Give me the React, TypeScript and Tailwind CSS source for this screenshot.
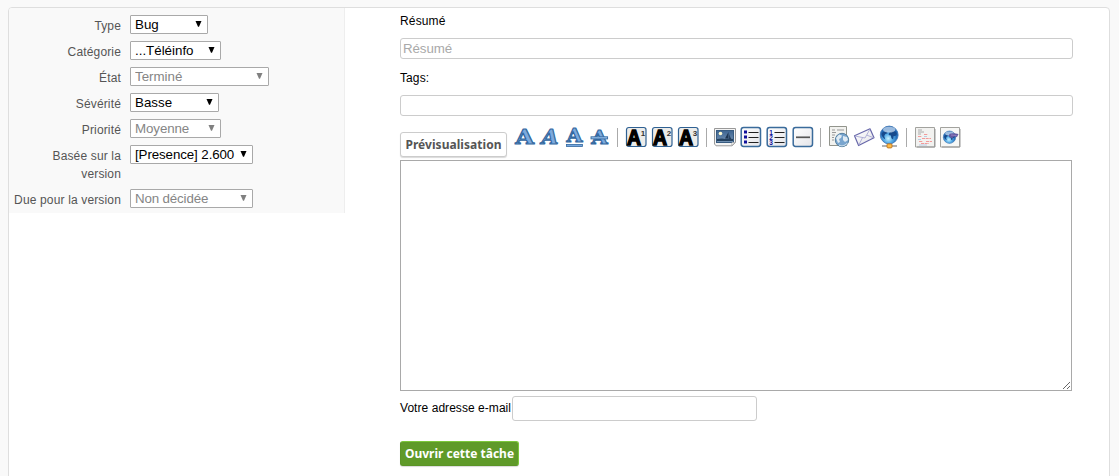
import type { ReactNode } from "react";

type Field = { label: string; value: string; width: string; height: string; tracking: string; disabled?: boolean };

const fields: Field[] = [
  { label: "Type", value: "Bug", width: "w-[78px]", height: "h-[26px]", tracking: "tracking-normal" },
  { label: "Catégorie", value: "...Téléinfo", width: "w-[91px]", height: "h-[26px]", tracking: "tracking-normal" },
  { label: "État", value: "Terminé", width: "w-[139px]", height: "h-[26px]", tracking: "tracking-normal", disabled: true },
  { label: "Sévérité", value: "Basse", width: "w-[89px]", height: "h-[26px]", tracking: "tracking-normal" },
  { label: "Priorité", value: "Moyenne", width: "w-[91px]", height: "h-[26px]", tracking: "tracking-[-0.1px]", disabled: true },
  { label: "Basée sur la version", value: "[Presence] 2.600", width: "w-[123px]", height: "h-[44px]", tracking: "tracking-[-0.1px]" },
  { label: "Due pour la version", value: "Non décidée", width: "w-[123px]", height: "h-[24px]", tracking: "tracking-[-0.15px]", disabled: true },
];

function FieldRow({ label, value, width, height, tracking, disabled }: Field) {
  return (
    <div className={`flex items-start ${height}`}>
      <label className="mt-[2px] w-[112px] shrink-0 pl-[4px] text-right text-[12px] leading-[18px] tracking-[0.15px] text-[#555]">{label}</label>
      <div className={`relative ml-[9px] h-[19px] ${width}`}>
        <select
          disabled={disabled}
          className={`block h-[19px] w-full appearance-none rounded-[1px] border border-[#a9a9a9] bg-white pl-[4px] text-[13.33px] leading-[17px] opacity-100 ${tracking} ${disabled ? "text-[#858585]" : "text-black"}`}
        >
          <option>{value}</option>
        </select>
        <svg className="pointer-events-none absolute top-[6px] right-[6px]" width="7" height="6" viewBox="0 0 7 6">
          <path d="M0.5 0H6.5L4 5.8H3Z" fill={disabled ? "#808080" : "#000"} />
        </svg>
      </div>
    </div>
  );
}

function Icon({ children }: { children: ReactNode }) {
  return (
    <svg className="block h-[24px] w-[22px] shrink-0" viewBox="0 0 22 24">
      {children}
    </svg>
  );
}

function Separator({ className }: { className: string }) {
  return <div className={`h-[19px] w-px bg-[#aaa] ${className}`} />;
}

function SmallA({ level }: { level: string }) {
  return (
    <Icon>
      <rect x="1.5" y="2.5" width="19.5" height="19" rx="2.2" fill="#ececea" stroke="#2f6193" strokeWidth="1.2" />
      <text x="2" y="20" fontFamily="Liberation Sans, sans-serif" fontWeight="700" fontSize="22.5" textLength="14" lengthAdjust="spacingAndGlyphs" fill="#000" stroke="#000" strokeWidth="1.6">A</text>
      <text x="15.8" y="10.5" fontFamily="Liberation Sans, sans-serif" fontWeight="700" fontSize="8" fill="#333">{level}</text>
    </Icon>
  );
}

function Frame() {
  return <rect x="1.2" y="2.5" width="19.3" height="19" rx="2.4" fill="url(#paper)" stroke="#3a6b9b" strokeWidth="1.5" />;
}

function Globe({ cx, cy, r }: { cx: number; cy: number; r: number }) {
  return (
    <g transform={`translate(${cx} ${cy}) scale(${r / 8})`}>
      <circle r="8" fill="url(#ocean)" stroke="#4078b4" strokeWidth="0.8" />
      <path d="M-7-1C-6-3-4-3.5-2-3L-1.5-1.5-3.5-1-4.5 1-3.5 4-5 3-6.5 1ZM0-2 3-3.5 6-3 7-1 5.5 1 4 1 3.5 4 2 3 1.5.5-.5 0Z" fill="#164a8c" />
      <ellipse cx="0" cy="-4.8" rx="5.6" ry="2.6" fill="#fff" opacity=".55" />
    </g>
  );
}

function StyledA({ x, y, size, width, italic }: { x: number; y: number; size: number; width: number; italic?: boolean }) {
  return (
    <text
      x={x}
      y={y}
      fontFamily="DejaVu Serif, serif"
      fontWeight="700"
      fontStyle={italic ? "italic" : "normal"}
      fontSize={size}
      textLength={width}
      lengthAdjust="spacingAndGlyphs"
      fill="#7caade"
      stroke="#34689f"
      strokeWidth="1.1"
      strokeLinejoin="round"
    >
      A
    </text>
  );
}

function Toolbar() {
  return (
    <div className="flex h-[24px] items-start">
      <div className="flex gap-[3px]">
        <Icon>
          <StyledA x={1.2} y={18.8} size={20} width={18.8} />
        </Icon>
        <Icon>
          <StyledA x={2.4} y={18.8} size={20} width={17} italic />
        </Icon>
        <Icon>
          <StyledA x={2.4} y={16.8} size={19} width={16} />
          <rect x="2.4" y="19.4" width="16" height="2.1" fill="#76a7df" stroke="#34689f" strokeWidth=".8" />
        </Icon>
        <Icon>
          <StyledA x={2.2} y={18.8} size={19} width={16.4} />
          <rect x="2" y="11.8" width="16.6" height="2.1" fill="#9ac3ef" stroke="#34689f" strokeWidth=".9" />
        </Icon>
      </div>
      <Separator className="mt-[3px] ml-[6px]" />
      <div className="ml-[7px] flex gap-[4px]">
        <SmallA level="1" />
        <SmallA level="2" />
        <SmallA level="3" />
      </div>
      <Separator className="mt-[3px] ml-[7px]" />
      <div className="ml-[7px] flex gap-[4px]">
        <Icon>
          <path d="M.5 3.5H21.5V17.5L18 20.8H2L.5 19Z" fill="#f4f4f4" stroke="#999" />
          <rect x="2.5" y="5.5" width="17" height="12" fill="url(#photo)" stroke="#375b80" />
          <circle cx="6.5" cy="8.5" r="1.8" fill="#fffbd1" />
          <path d="M3 14 8 13.5 11 14 15 13.5 19 14V16H3Z" fill="#24415f" />
          <path d="M14.5 7 11 13.5H14.5ZM15.2 9V14H17Z" fill="#1d3552" />
          <path d="M17.5 20.5 18 17.5H21Z" fill="#fff" stroke="#aaa" strokeWidth=".7" />
        </Icon>
        <Icon>
          <Frame />
          <path d="M4 5.5H7V8.5H4ZM4 10.5H7V13.5H4ZM4 15.5H7V18.5H4Z" fill="#10109b" />
          <path d="M8.5 7.5H18.5M8.5 12.5H18.5M8.5 17.5H18.5" stroke="#222" strokeWidth="1.2" />
        </Icon>
        <Icon>
          <Frame />
          {["1", "2", "3"].map((digit, i) => (
            <text key={digit} x="3.3" y={9.5 + i * 5} fontFamily="Liberation Sans, sans-serif" fontWeight="700" fontSize="6.5" fill="#10109b">{digit}</text>
          ))}
          <path d="M8.5 7.5H18.5M8.5 12.5H18.5M8.5 17.5H18.5" stroke="#222" strokeWidth="1.2" />
        </Icon>
        <Icon>
          <Frame />
          <path d="M4 12.3H18" stroke="#555" strokeWidth="1.7" />
        </Icon>
      </div>
      <Separator className="mt-[3px] ml-[6px]" />
      <div className="ml-[7px] flex gap-[3px]">
        <Icon>
          <path d="M1.5 1.5H18.5V20.5H1.5Z" fill="#f2f2ef" stroke="#92948c" />
          <path d="M4 5H7M9 5H16M4 7.5H8M4 10H7M4 12.5H6M4 15H6" stroke="#999" />
          <circle cx="14" cy="15" r="6.7" fill="#79a5ce" stroke="#56809f" />
          <path d="M8 13 11 9.5 14 10.5 13 13 11 14 12 17 10 18ZM15 11 19 12 20 15 17 17 15 15Z" fill="#e0ebf3" />
          <path d="M11 20C14 22 18 20 19.5 18" fill="none" stroke="#dbe9f3" />
        </Icon>
        <Icon>
          <path d="M1.5 10.8 17 3.8 21 12.8 5.6 20.5Z" fill="url(#paper)" stroke="#6868aa" strokeWidth="1.2" strokeLinejoin="round" />
          <path d="M1.8 11 12 13 17 4M5.8 20 9.5 12.7M20.7 12.8 14 10.2" fill="none" stroke="#a0a0cf" strokeWidth=".8" />
        </Icon>
        <Icon>
          <Globe cx={11.2} cy={10} r={8.9} />
          <path d="M4 21H19M11.5 19V20" stroke="#999" strokeWidth="1.6" />
          <rect x="9" y="18.9" width="5" height="4" rx="1" fill="#ffbd46" stroke="#c37a24" />
        </Icon>
      </div>
      <Separator className="mt-[3px] ml-[6px]" />
      <div className="ml-[7px] flex gap-[3px]">
        <Icon>
          <path d="M1.5 2.5H20.5V22H1.5Z" fill="#f2f2f0" stroke="#a2a29e" />
          <path d="M4 5H8M4 7H10M4 9H7" stroke="#999" strokeWidth=".8" />
          <path d="M4 11.5H8M10 9.5H14M8 13.5H17M5 16.5H9M12 16.5H18M7 18.5H15" stroke="#f29a9a" strokeDasharray="3 .7" />
          <path d="M4 14.5H7M10 11.5H13M5 20H13" stroke="#a9c1df" strokeWidth=".8" />
          <path d="M21 4V22H3" fill="none" stroke="#999" />
        </Icon>
        <Icon>
          <path d="M1.5 2.5H20.5V22H1.5Z" fill="#f7f7f5" stroke="#a2a29e" />
          <Globe cx={10.5} cy={12.2} r={6.2} />
          <path d="M9.5 11C10 7.5 15 8 19.5 9L18 12 15 11.5 13 13.5Z" fill="#6459a0" />
          <path d="M12 10 17.5 10.5" stroke="#9380c1" />
          <path d="M21 4V22H3" fill="none" stroke="#999" />
        </Icon>
      </div>
      <svg className="h-0 w-0">
        <defs>
          <linearGradient id="paper" x1="0" y1="0" x2="1" y2="1"><stop stopColor="#fff" /><stop offset="1" stopColor="#e4e4e8" /></linearGradient>
          <linearGradient id="photo" x1="0" y1="0" x2="0" y2="1"><stop stopColor="#3d6490" /><stop offset="1" stopColor="#7594b5" /></linearGradient>
          <radialGradient id="ocean" cx=".45" cy=".7"><stop stopColor="#c9f3ff" /><stop offset=".5" stopColor="#58aee8" /><stop offset="1" stopColor="#1f67b5" /></radialGradient>
        </defs>
      </svg>
    </div>
  );
}

export default function App() {
  return (
    <div className="h-[476px] overflow-hidden bg-[#f9f9f9] px-[8px] pt-[7px] font-['Liberation_Sans',Arial,sans-serif] text-[12px] text-black">
      <div className="flex h-[500px] w-[1102px] items-start rounded-[4px] border border-[#dedede] bg-white">
        <aside className="h-[205px] w-[336px] shrink-0 rounded-tl-[3px] border-r border-[#eee] bg-[#f9f9f9] pt-[7px]">
          {fields.map((field) => <FieldRow key={field.label} {...field} />)}
        </aside>
        <main className="ml-[55px] w-[673px]">
          <label className="mt-[4px] block h-[18px] leading-[18px] tracking-[0.15px]">Résumé</label>
          <input placeholder="Résumé" className="mt-[8px] block h-[21px] w-full rounded-[3px] border border-[#ccc] bg-white px-[2px] text-[13.33px] tracking-[-0.1px] placeholder:text-[#a9a9a9]" />
          <label className="mt-[10px] block h-[18px] leading-[18px] tracking-[0.1px]">Tags:</label>
          <input className="mt-[8px] block h-[21px] w-full rounded-[3px] border border-[#ccc] bg-white px-[2px]" />
          <div className="mt-[9px] flex h-[35px] items-start">
            <button className="mt-[7px] mr-[7px] h-[25px] w-[107px] shrink-0 rounded-[3px] border border-[#ccc] bg-white font-['Noto_Sans','Open_Sans',sans-serif] text-[12px] font-bold whitespace-nowrap text-[#555] shadow-[0_1px_1px_rgba(0,0,0,0.15)]"><span className="-mx-1 tracking-[0.05px]">Prévisualisation</span></button>
            <Toolbar />
          </div>
          <textarea className="block h-[231px] w-[672px] resize border border-[#a9a9a9] bg-white p-[2px]" />
          <div className="mt-[5px] flex h-[25px] items-center">
            <label className="w-[112px] shrink-0 pb-px tracking-[0.05px] whitespace-nowrap">Votre adresse e-mail</label>
            <input className="h-[25px] w-[245px] rounded-[3px] border border-[#ccc] bg-white" />
          </div>
          <button className="mt-[20px] block h-[25px] w-[119px] rounded-[3px] border border-[#5b9427] border-t-[#7cc83b] border-r-[#7cc83b] bg-[#5f9a29] font-['Noto_Sans','Open_Sans',sans-serif] text-[12px] font-bold whitespace-nowrap text-white shadow-[0_1px_1px_rgba(0,0,0,0.15)]">Ouvrir cette tâche</button>
        </main>
      </div>
    </div>
  );
}
